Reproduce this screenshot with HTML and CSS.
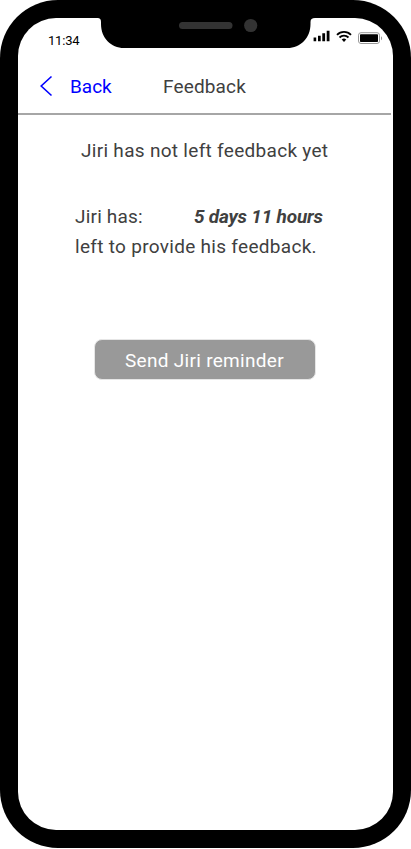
FILE: index.html
```html
<!DOCTYPE html>
<html lang="en">
<head>
<meta charset="utf-8">
<title>Feedback</title>
<link rel="stylesheet" href="styles.css">
</head>
<body>
<div class="phone">
  <main class="screen">
    <div class="status">
      <span class="time">11:34</span>
      <svg class="status-icons" width="70" height="14" viewBox="0 0 70 14">
        <path d="M.6 9.600h2.600v3.700H.6zM5 7.800h2.700v5.500H5zM9.300 5.300h2.800v8H9.300zM13.700 2.800h2.800v10.500h-2.800z"/>
        <g fill="none" stroke="#000" stroke-width="1.8">
          <path d="M24 6.800a9.800 9.800 0 0 1 14 0M26.500 9.500a6.300 6.300 0 0 1 9 0"/>
        </g>
        <path d="M31 14l-2.300-2.500a3.400 3.400 0 0 1 4.600 0z"/>
        <rect x="45.500" y="4.700" width="21" height="10.800" rx="2.500" fill="none" stroke="#999"/>
        <rect x="47" y="6.200" width="18" height="7.900" rx=".8"/>
        <path d="M68 8.200c1.500.6 1.500 3.400 0 4z" fill="#999"/>
      </svg>
    </div>
    <header class="nav">
      <a class="back"><svg class="chevron" width="14" height="22" viewBox="0 0 14 22"><path d="M12.500 1.500L2.200 11l10.300 9.500" fill="none" stroke="#00f" stroke-width="1.600"/></svg><span class="back-label">Back</span></a>
      <h1 class="title">Feedback</h1>
    </header>
    <p class="headline">Jiri has not left feedback yet</p>
    <div class="remaining">
      <div class="row"><span class="who">Jiri has:</span><strong class="countdown">5 days 11 hours</strong></div>
      <div class="note">left to provide his feedback.</div>
    </div>
    <button class="remind"><span class="remind-label">Send Jiri reminder</span></button>
  </main>
  <svg class="notch" width="226" height="34" viewBox="0 0 226 34">
    <path d="M6 0h219v4c-3 0-4.500 1-4.500 4v2c0 14-10 24-23 24H34C21 34 11 24 11 10V8C11 5 10 4 7 4H6z"/>
    <rect x="89" y="8" width="53.500" height="7" rx="3.500" fill="#333"/>
    <circle cx="160.700" cy="11.500" r="6.600" fill="#333"/>
  </svg>
</div>
</body>
</html>
```
FILE: styles.css
```css
* { box-sizing: border-box; }
body {
  margin: 0;
  background: #fff;
  color: #404040;
  font: 19px/30px Roboto, "Liberation Sans", sans-serif;
}
.phone {
  position: relative;
  width: 411px;
  height: 848px;
  padding: 18px;
  background: #000;
  border-radius: 58px;
}
.screen {
  display: flex;
  flex-direction: column;
  width: 375px;
  height: 812px;
  background: #fff;
  border-radius: 38px;
}
.notch {
  position: absolute;
  left: 90px;
  top: 14px;
}
.status {
  display: flex;
  justify-content: space-between;
  height: 42px;
  padding: 10px 10px 0 30px;
}
.time {
  color: #000;
  font-size: 13px;
  line-height: 26px;
  letter-spacing: -.2px;
}
.status-icons { overflow: visible; }
.nav {
  display: flex;
  align-items: center;
  width: 373px;
  height: 55px;
  padding-left: 21px;
  border-bottom: 2px solid #a6a6a6;
}
.back {
  display: flex;
  align-items: center;
  width: 124px;
  color: #00f;
}
.chevron {
  position: relative;
  top: -1px;
}
.back-label { margin-left: 17px; }
.title {
  margin: 0;
  font-size: 19px;
  font-weight: 400;
  letter-spacing: .15px;
}
.headline {
  margin: 21px 0 0 63px;
  letter-spacing: .3px;
}
.remaining {
  margin: 36px 0 0 57px;
  letter-spacing: .3px;
}
.row { display: flex; }
.who {
  width: 119px;
  letter-spacing: .2px;
}
.countdown {
  font-style: italic;
  font-weight: 700;
  letter-spacing: -.2px;
}
.remind {
  width: 222px;
  height: 41px;
  margin: 77px 0 0 76px;
  padding: 3px 0 0 30px;
  border: 1px solid #e6e6e6;
  border-radius: 8px;
  background: #999;
  color: #fff;
  font: inherit;
  text-align: left;
  letter-spacing: .3px;
}
```
